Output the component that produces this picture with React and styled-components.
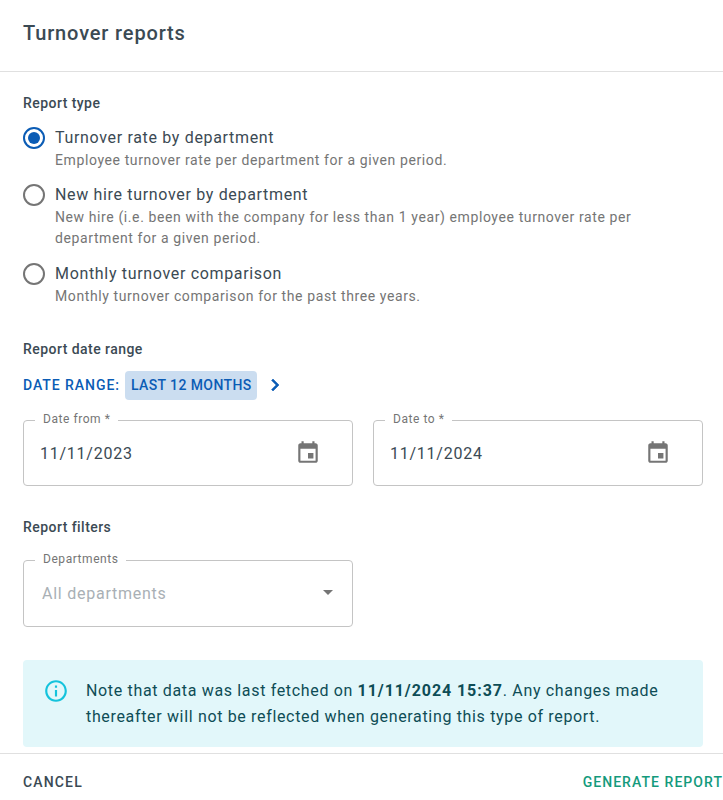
import React from 'react';
import styled, { createGlobalStyle } from 'styled-components';

const GlobalStyle = createGlobalStyle`
  html, body {
    margin: 0;
    padding: 0;
    background: #fff;
  }
  * {
    box-sizing: border-box;
  }
  body {
    font-family: 'Roboto', 'Liberation Sans', sans-serif;
    color: #3b4a54;
    overflow: hidden;
  }
`;

const Dialog = styled.div`
  width: 723px;
  height: 800px;
  display: flex;
  flex-direction: column;
  overflow: hidden;
`;

const Header = styled.header`
  height: 72px;
  flex: none;
  padding: 20px 23px 0;
  border-bottom: 1px solid #e0e0e0;
`;

const Title = styled.h2`
  margin: 0;
  font-size: 20px;
  line-height: 26px;
  font-weight: 500;
  letter-spacing: 0.85px;
  color: #3b4a54;
`;

const Content = styled.div`
  flex: 1;
  padding: 0 20px 0 23px;
`;

const SectionLabel = styled.h3`
  margin: 0;
  font-size: 14px;
  line-height: 20px;
  font-weight: 500;
  letter-spacing: 0.45px;
  color: #3b4a54;
  padding-top: ${(p) => p.$top}px;
`;

const RadioList = styled.div`
  display: flex;
  flex-direction: column;
  padding-top: 13px;
`;

const RadioRow = styled.div`
  display: flex;
  gap: 10px;
  padding-bottom: ${(p) => p.$gap}px;
`;

const RadioCircle = styled.span`
  width: 22px;
  height: 22px;
  flex: none;
  border-radius: 50%;
  border: 2px solid ${(p) => (p.$checked ? '#0b5cb5' : '#757575')};
  display: flex;
  align-items: center;
  justify-content: center;
  margin-top: 1px;

  &::after {
    content: '';
    display: ${(p) => (p.$checked ? 'block' : 'none')};
    width: 12px;
    height: 12px;
    border-radius: 50%;
    background: #0b5cb5;
  }
`;

const RadioText = styled.div`
  display: flex;
  flex-direction: column;
`;

const RadioTitle = styled.span`
  font-size: 16px;
  line-height: 24px;
  letter-spacing: 0.67px;
  color: #3b4a54;
`;

const RadioHint = styled.span`
  font-size: 14px;
  line-height: 21px;
  letter-spacing: 0.6px;
  color: #757575;
`;

const RangeRow = styled.div`
  display: flex;
  align-items: center;
  height: 30px;
  margin-top: 11px;
  color: #0b5cb5;
  font-size: 14px;
  font-weight: 500;
  letter-spacing: 0.95px;
`;

const RangeChip = styled.span`
  height: 29px;
  margin-left: 5px;
  padding: 0 5px 0 6px;
  display: flex;
  align-items: center;
  background: #cbddf0;
  border-radius: 4px;
  letter-spacing: 0.4px;
`;

const RangeArrow = styled.svg`
  width: 24px;
  height: 24px;
  margin-left: 6px;
  fill: #0b5cb5;
  stroke: #0b5cb5;
  stroke-width: 0.6;
`;

const DateGrid = styled.div`
  display: grid;
  grid-template-columns: 330px 330px;
  gap: 20px;
  margin-top: 20px;
`;

const Field = styled.div`
  position: relative;
  width: 330px;
  height: ${(p) => p.$height}px;
  margin-top: ${(p) => p.$top || 0}px;
  border: 1px solid #c4c4c4;
  border-radius: 4px;
  display: flex;
  align-items: center;
  justify-content: space-between;
  padding: 0 ${(p) => p.$right}px 0 ${(p) => p.$left}px;
  font-size: 16px;
  letter-spacing: 0.75px;
  color: ${(p) => (p.$muted ? '#a9b0b5' : '#3b4a54')};
`;

const FieldLegend = styled.span`
  position: absolute;
  top: -10px;
  left: 11px;
  padding: 0 8px;
  background: #fff;
  font-size: 12px;
  line-height: 16px;
  letter-spacing: 0.55px;
  color: #757575;
`;

const FieldIcon = styled.svg`
  width: 26px;
  height: 26px;
  margin-bottom: 2px;
  fill: #757575;
  flex: none;
`;

const Caret = styled.span`
  width: 0;
  height: 0;
  margin-bottom: 2px;
  border-left: 5px solid transparent;
  border-right: 5px solid transparent;
  border-top: 5px solid #757575;
`;

const Notice = styled.div`
  display: flex;
  gap: 17px;
  height: 87px;
  margin-top: 33px;
  padding: 18px 20px 0 20px;
  background: #e2f7fa;
  border-radius: 4px;
  color: #0e4d56;
  font-size: 16px;
  line-height: 26px;
  letter-spacing: 0.66px;
`;

const NoticeIcon = styled.svg`
  width: 26px;
  height: 26px;
  flex: none;
  fill: #14c3dc;
`;

const NoticeDate = styled.b`
  letter-spacing: 0.92px;
`;

const Footer = styled.footer`
  height: 47px;
  flex: none;
  border-top: 1px solid #e0e0e0;
  display: flex;
  align-items: center;
  justify-content: space-between;
  padding: 9px 0 0 23px;
`;

const FooterButton = styled.button`
  border: 0;
  padding: 0;
  background: none;
  font-family: inherit;
  font-size: 14px;
  font-weight: 500;
  letter-spacing: ${(p) => p.$spacing}px;
  color: ${(p) => p.$color};
`;

const reportTypes = [
  {
    title: 'Turnover rate by department',
    hint: 'Employee turnover rate per department for a given period.',
    checked: true,
    gap: 12,
  },
  {
    title: 'New hire turnover by department',
    hint: 'New hire (i.e. been with the company for less than 1 year) employee turnover rate per department for a given period.',
    gap: 13,
  },
  {
    title: 'Monthly turnover comparison',
    hint: 'Monthly turnover comparison for the past three years.',
    gap: 0,
  },
];

function CalendarIcon() {
  return (
    <FieldIcon viewBox="0 0 24 24">
      <path d="M19 4h-1V2h-2v2H8V2H6v2H5c-1.11 0-1.99.9-1.99 2L3 20c0 1.1.89 2 2 2h14c1.1 0 2-.9 2-2V6c0-1.1-.9-2-2-2zm0 16H5V9h14v11zm-7-7h5v5h-5z" />
    </FieldIcon>
  );
}

export default function App() {
  return (
    <>
      <GlobalStyle />
      <Dialog>
        <Header>
          <Title>Turnover reports</Title>
        </Header>
        <Content>
          <SectionLabel $top={21}>Report type</SectionLabel>
          <RadioList>
            {reportTypes.map((item) => (
              <RadioRow key={item.title} $gap={item.gap}>
                <RadioCircle $checked={item.checked} />
                <RadioText>
                  <RadioTitle>{item.title}</RadioTitle>
                  <RadioHint>{item.hint}</RadioHint>
                </RadioText>
              </RadioRow>
            ))}
          </RadioList>
          <SectionLabel $top={32}>Report date range</SectionLabel>
          <RangeRow>
            DATE RANGE:
            <RangeChip>LAST 12 MONTHS</RangeChip>
            <RangeArrow viewBox="0 0 24 24">
              <path d="M10 6 8.59 7.41 13.17 12l-4.58 4.59L10 18l6-6z" />
            </RangeArrow>
          </RangeRow>
          <DateGrid>
            <Field $height={66} $left={16} $right={31}>
              <FieldLegend>Date from *</FieldLegend>
              11/11/2023
              <CalendarIcon />
            </Field>
            <Field $height={66} $left={16} $right={31}>
              <FieldLegend>Date to *</FieldLegend>
              11/11/2024
              <CalendarIcon />
            </Field>
          </DateGrid>
          <SectionLabel $top={31}>Report filters</SectionLabel>
          <Field $height={67} $muted $left={18} $right={19} $top={23}>
            <FieldLegend>Departments</FieldLegend>
            All departments
            <Caret />
          </Field>
          <Notice>
            <NoticeIcon viewBox="0 0 24 24">
              <path d="M11 7h2v2h-2zm0 4h2v6h-2zm1-9C6.48 2 2 6.48 2 12s4.48 10 10 10 10-4.48 10-10S17.52 2 12 2zm0 18c-4.41 0-8-3.59-8-8s3.59-8 8-8 8 3.59 8 8-3.59 8-8 8z" />
            </NoticeIcon>
            <div>
              Note that data was last fetched on <NoticeDate>11/11/2024 15:37</NoticeDate>. Any changes made thereafter will not be reflected when generating this type of report.
            </div>
          </Notice>
        </Content>
        <Footer>
          <FooterButton $color="#3b4a54" $spacing={1.15}>CANCEL</FooterButton>
          <FooterButton $color="#149a7c" $spacing={1.05}>GENERATE REPORT</FooterButton>
        </Footer>
      </Dialog>
    </>
  );
}
